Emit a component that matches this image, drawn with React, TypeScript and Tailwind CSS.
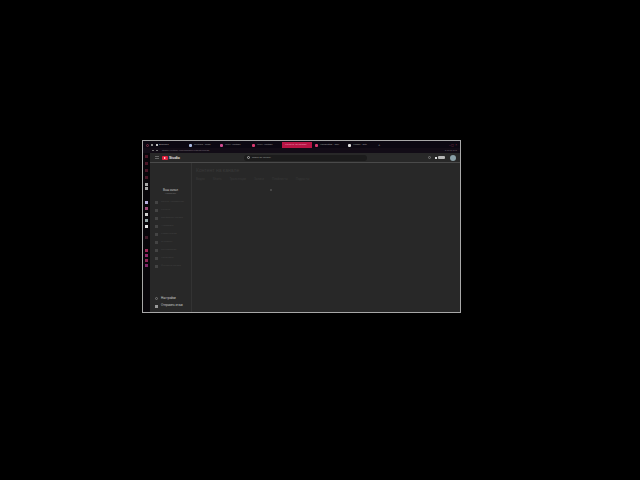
import React from 'react';

const tabs = [
    { label: 'Музыка - Tube', color: 'bg-[#a8b8e0]', w: 'w-[31px]' },
    { label: '(999) Youtube', color: 'bg-[#d04a90]', w: 'w-[32px]' },
    { label: '(999) Youtube', color: 'bg-[#d83a70]', w: 'w-[30px]' },
];

const railTop = ['bg-[#4a1626]', 'bg-[#4a1626]', 'bg-[#4a1626]', 'bg-[#4a1626]'];
const railMid = ['bg-[#b8aee0]', 'bg-[#a04878]', 'bg-[#d0d0d0]', 'bg-[#98a8a8]', 'bg-[#e4e4e4]'];
const railLow = ['bg-[#a02858]', 'bg-[#902868]', 'bg-[#902858]', 'bg-[#802868]'];

const menu = ['Панель управления', 'Контент', 'Плейлисты канала', 'Аналитика', 'Комментарии', 'Субтитры', 'Монетизация', 'Настройка', 'Фонотека канала'];

const columns = ['Видео', 'Shorts', 'Трансляции', 'Записи', 'Плейлисты', 'Подкасты'];

export default function App() {
    return (
        <div className="min-h-[480px] bg-black pt-[140px] pl-[142px] font-['Liberation_Sans',sans-serif]">
            <div className="flex h-[173px] w-[319px] flex-col overflow-hidden border border-[#a8a8a8] bg-[#282828]">
                {/* Browser tabs */}
                <div className="flex h-[7px] items-end bg-[#0c0812] pl-[3px]">
                    <div className="flex h-[6px] items-center">
                        <span className="h-[3px] w-[3px] rounded-full border border-[#803048]" />
                        <span className="ml-[2px] h-[2px] w-[2px] bg-[#909090]" />
                        <span className="ml-[3px] h-[2px] w-[2px] bg-[#c0c0c0]" />
                        <span className="ml-[1px] w-[30px] text-[2.5px] leading-[4px] text-[#b0b0b0]">Вкладка</span>
                        {tabs.map((tab) => (
                            <div key={tab.color} className={`flex items-center gap-[2px] ${tab.w}`}>
                                <span className={`h-[3px] w-[3px] rounded-[1px] ${tab.color}`} />
                                <span className="whitespace-nowrap text-[2.5px] leading-[4px] text-[#a8a8a8]">{tab.label}</span>
                            </div>
                        ))}
                        <div className="flex h-[6px] w-[30px] items-center bg-[#b81444] px-[3px]">
                            <span className="whitespace-nowrap text-[2.5px] leading-[4px] text-[#e8b0c0]">Контент на канале</span>
                        </div>
                        <div className="ml-[3px] flex w-[33px] items-center gap-[2px]">
                            <span className="h-[3px] w-[3px] rounded-[1px] bg-[#d83a70]" />
                            <span className="whitespace-nowrap text-[2.5px] leading-[4px] text-[#a8a8a8]">Настройки - Tool</span>
                        </div>
                        <div className="flex w-[30px] items-center gap-[2px]">
                            <span className="h-[3px] w-[3px] rounded-[1px] bg-[#e0e0e0]" />
                            <span className="whitespace-nowrap text-[2.5px] leading-[4px] text-[#a8a8a8]">Новая - Site</span>
                        </div>
                        <span className="text-[4px] leading-[4px] text-[#909090]">+</span>
                    </div>
                    <span className="ml-auto mr-[3px] text-[3px] leading-[6px] text-[#903050]">– ▢ ×</span>
                </div>

                {/* Address bar */}
                <div className="flex h-[5px] items-center gap-[2px] bg-[#120c16] pl-[9px]">
                    <span className="h-[1px] w-[2px] bg-[#707070]" />
                    <span className="h-[1px] w-[2px] bg-[#707070]" />
                    <span className="ml-[2px] text-[2.5px] leading-[3px] text-[#807880]">studio.youtube.com/channel/videos/upload</span>
                    <span className="ml-auto mr-[3px] text-[2.5px] leading-[3px] text-[#989098]">▪ ▪ ▪ ▪ ▪ ▪ ▪ ▪</span>
                </div>

                <div className="flex min-h-0 flex-1">
                    {/* Browser side rail */}
                    <div className="flex w-[7px] shrink-0 flex-col items-center bg-[#08060a] pt-[2px]">
                        <div className="flex flex-col gap-[4px]">
                            {railTop.map((c, i) => (
                                <span key={i} className={`h-[3px] w-[3px] ${c}`} />
                            ))}
                        </div>
                        <div className="mt-[4px] flex flex-col gap-[1px]">
                            <span className="h-[3px] w-[3px] bg-[#a8a8a8]" />
                            <span className="h-[3px] w-[3px] bg-[#a8a8a8]" />
                        </div>
                        <div className="mt-[11px] flex flex-col gap-[3px]">
                            {railMid.map((c, i) => (
                                <span key={i} className={`h-[3px] w-[3px] ${c}`} />
                            ))}
                        </div>
                        <div className="mt-[8px] h-[3px] w-[3px] bg-[#401a28]" />
                        <div className="mt-[10px] flex flex-col gap-[2px]">
                            {railLow.map((c, i) => (
                                <span key={i} className={`h-[3px] w-[3px] ${c}`} />
                            ))}
                        </div>
                    </div>

                    <div className="flex min-w-0 flex-1 flex-col">
                        {/* Studio header */}
                        <div className="flex h-[10px] shrink-0 items-center border-b border-[#4a4a4a] bg-[#282828] pl-[5px] pr-[4px]">
                            <span className="h-[3px] w-[4px] border-y border-[#666]" />
                            <span className="ml-[3px] flex h-[4px] w-[6px] items-center justify-center rounded-[1px] bg-[#e0203c]">
                                <svg width="2" height="2" viewBox="0 0 2 2"><path d="M0 0L2 1L0 2Z" fill="#fff" /></svg>
                            </span>
                            <span className="ml-[1px] text-[3.5px] font-bold leading-[6px] text-[#e8e8e8]">Studio</span>
                            <div className="ml-[64px] flex h-[6px] w-[123px] items-center gap-[2px] rounded-full bg-[#1c1c1c] px-[3px]">
                                <span className="h-[3px] w-[3px] rounded-full border border-[#aaa]" />
                                <span className="whitespace-nowrap text-[2.5px] leading-[4px] text-[#a0a0a0]">Поиск по каналу</span>
                            </div>
                            <span className="ml-auto h-[3px] w-[3px] rounded-full border border-[#777]" />
                            <span className="ml-[4px] h-[2px] w-[2px] bg-[#ddd]" />
                            <span className="ml-[1px] h-[3px] w-[7px] rounded-[1px] bg-[#b8b8b8]" />
                            <span className="ml-[5px] h-[6px] w-[6px] rounded-full bg-[#8aa0a8]" />
                        </div>

                        <div className="flex min-h-0 flex-1">
                            {/* Studio sidebar */}
                            <div className="flex w-[42px] shrink-0 flex-col border-r border-[#333] bg-[#282828]">
                                <div className="mt-[25px] flex flex-col items-center">
                                    <span className="text-[3px] leading-[4px] text-[#c8c8c8]">Ваш канал</span>
                                    <span className="text-[2.5px] leading-[4px] text-[#707070]">Название</span>
                                </div>
                                <div className="mt-[4px] flex flex-col gap-[4px] pl-[5px]">
                                    {menu.map((item) => (
                                        <div key={item} className="flex h-[4px] items-center gap-[3px]">
                                            <span className="h-[3px] w-[3px] bg-[#444]" />
                                            <span className="whitespace-nowrap text-[2.5px] leading-[4px] text-[#444]">{item}</span>
                                        </div>
                                    ))}
                                </div>
                                <div className="mt-auto mb-[4px] flex flex-col gap-[4px] pl-[5px]">
                                    <div className="flex h-[4px] items-center gap-[3px]">
                                        <span className="h-[3px] w-[3px] rounded-full border border-[#777]" />
                                        <span className="text-[3px] leading-[4px] text-[#d0d0d0]">Настройки</span>
                                    </div>
                                    <div className="flex h-[4px] items-center gap-[3px]">
                                        <span className="h-[3px] w-[3px] bg-[#999]" />
                                        <span className="text-[2.75px] leading-[4px] text-[#d0d0d0]">Отправить отзыв</span>
                                    </div>
                                </div>
                            </div>

                            {/* Content */}
                            <div className="min-w-0 flex-1 pl-[4px] pt-[4px]">
                                <div className="text-[5px] leading-[6px] text-[#3a3a3a]">Контент на канале</div>
                                <div className="mt-[4px] flex gap-[8px]">
                                    {columns.map((c) => (
                                        <span key={c} className="text-[3px] leading-[4px] text-[#3a3a3a]">{c}</span>
                                    ))}
                                </div>
                                <div className="mt-[8px] ml-[74px] h-[2px] w-[2px] rounded-full bg-[#505050]" />
                            </div>
                        </div>
                    </div>
                </div>
            </div>
        </div>
    );
}
